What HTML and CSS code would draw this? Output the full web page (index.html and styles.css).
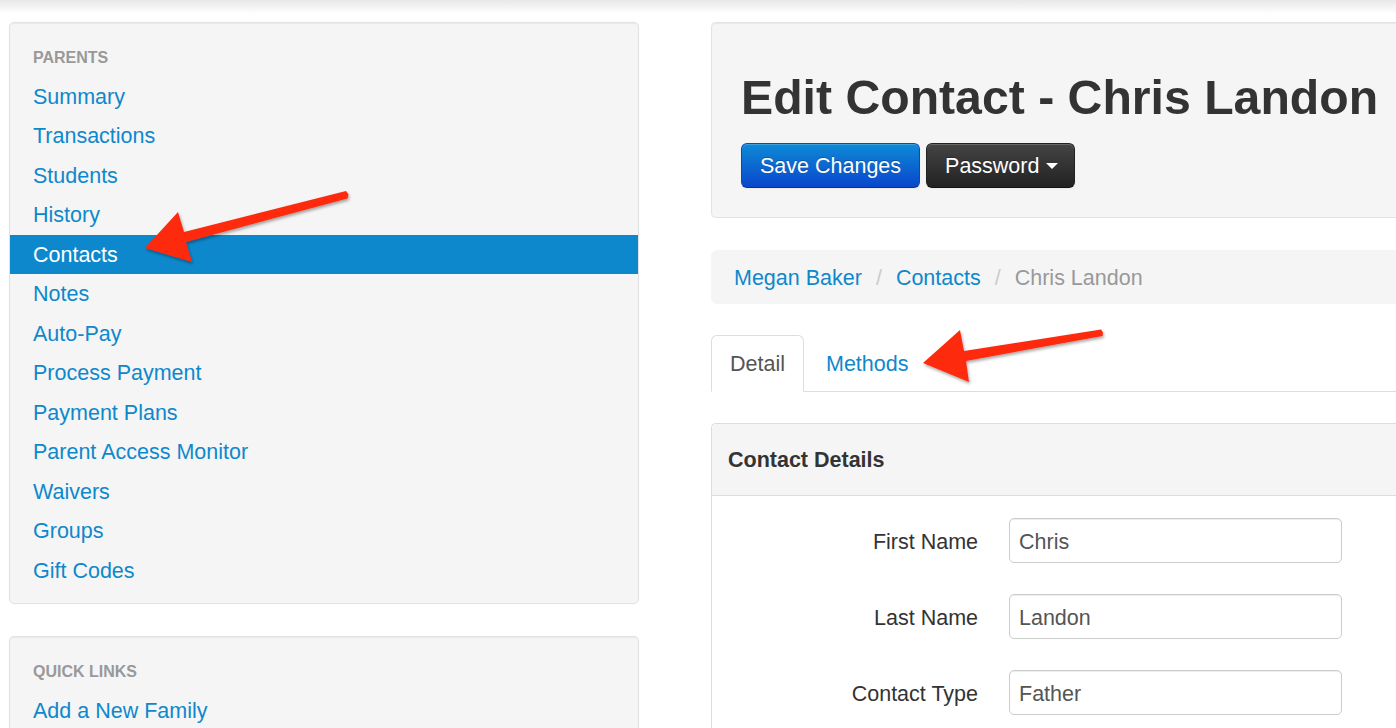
FILE: index.html
```html
<!DOCTYPE html>
<html>
<head>
<meta charset="utf-8">
<title>Edit Contact - Chris Landon</title>
<link rel="stylesheet" href="styles.css">
</head>
<body>
<div class="page">
  <aside class="sidebar">
    <div class="well">
      <div class="nav-header">Parents</div>
      <ul class="nav-list">
        <li><a href="#">Summary</a></li>
        <li><a href="#">Transactions</a></li>
        <li><a href="#">Students</a></li>
        <li><a href="#">History</a></li>
        <li class="active"><a href="#">Contacts</a></li>
        <li><a href="#">Notes</a></li>
        <li><a href="#">Auto-Pay</a></li>
        <li><a href="#">Process Payment</a></li>
        <li><a href="#">Payment Plans</a></li>
        <li><a href="#">Parent Access Monitor</a></li>
        <li><a href="#">Waivers</a></li>
        <li><a href="#">Groups</a></li>
        <li><a href="#">Gift Codes</a></li>
      </ul>
    </div>
    <div class="well well-short">
      <div class="nav-header">Quick Links</div>
      <ul class="nav-list">
        <li><a href="#">Add a New Family</a></li>
      </ul>
    </div>
  </aside>
  <main class="main">
    <div class="hero">
      <h1>Edit Contact - Chris Landon</h1>
      <div class="actions">
        <button class="btn btn-primary">Save Changes</button>
        <button class="btn btn-inverse">Password<span class="caret"></span></button>
      </div>
    </div>
    <nav class="breadcrumb">
      <a href="#">Megan Baker</a><span class="divider">/</span><a href="#">Contacts</a><span class="divider">/</span><span class="current">Chris Landon</span>
    </nav>
    <ul class="tabs">
      <li class="active"><a href="#">Detail</a></li>
      <li><a href="#">Methods</a></li>
    </ul>
    <section class="panel">
      <div class="panel-head">Contact Details</div>
      <div class="panel-body">
        <div class="row"><label>First Name</label><input type="text" value="Chris"></div>
        <div class="row"><label>Last Name</label><input type="text" value="Landon"></div>
        <div class="row"><label>Contact Type</label><input type="text" value="Father"></div>
      </div>
    </section>
  </main>
</div>
<svg class="arrows" width="1396" height="728" viewBox="0 0 1396 728">
  <defs>
    <filter id="sh" x="-20%" y="-20%" width="140%" height="140%">
      <feDropShadow dx="1" dy="2" stdDeviation="1.6" flood-color="#000" flood-opacity="0.35"/>
    </filter>
  </defs>
  <polygon filter="url(#sh)" fill="#fd2a0e" points="145,248 178,212 184,232 346,191 348.5,194.5 347.5,198.5 186,242 192,262"/>
  <polygon filter="url(#sh)" fill="#fd2a0e" points="923,363 960,330 964,351 1101,329.5 1103,332.5 1102.5,336 966,361 969,382"/>
</svg>
</body>
</html>
```
FILE: styles.css
```css
* { box-sizing: border-box; }
html, body { margin: 0; padding: 0; }
body {
  font-family: "Liberation Sans", Arial, Helvetica, sans-serif;
  color: #333;
  background: #fff linear-gradient(#e8e8e8, #ffffff 14px) no-repeat;
  background-size: 100% 14px;
  width: 1396px;
  height: 728px;
  overflow: hidden;
  position: relative;
}
.page {
  display: flex;
  align-items: flex-start;
  gap: 72px;
  padding: 22px 0 0 9px;
  height: 728px;
}
.sidebar {
  width: 630px;
  flex: none;
  display: flex;
  flex-direction: column;
  gap: 32px;
}
.well {
  background: #f5f5f5;
  border: 1px solid #e3e3e3;
  border-radius: 5px;
  box-shadow: inset 0 1px 1px rgba(0,0,0,.05), 0 0 2px rgba(0,0,0,.04);
  padding: 14px 0 13px;
}
.well-short {
  height: 92px;
  border-bottom: none;
  border-radius: 5px 5px 0 0;
  padding-bottom: 0;
}
.nav-header {
  font-size: 16px;
  font-weight: bold;
  color: #999;
  text-transform: uppercase;
  line-height: 39.5px;
  padding-left: 23px;
  padding-top: 1px;
  height: 39.5px;
}
.nav-list { list-style: none; margin: 0; padding: 0; }
.nav-list a {
  display: block;
  height: 39.5px;
  line-height: 39.5px;
  padding: 1px 0 0 23px;
  font-size: 21.5px;
  color: #0e88cc;
  text-decoration: none;
}
.nav-list .active a { background: #0e88cc; color: #fff; }

.main { width: 685px; flex: none; }
.hero {
  background: #f5f5f5;
  border: 1px solid #e3e3e3;
  border-right: none;
  border-radius: 5px 0 0 5px;
  box-shadow: inset 0 1px 1px rgba(0,0,0,.05);
  padding: 29px;
}
.hero h1 {
  font-size: 48.2px;
  line-height: 53px;
  margin: 19px 0;
  font-weight: bold;
  color: #333;
  white-space: nowrap;
}
.actions { display: flex; gap: 6px; }
.btn {
  display: inline-flex;
  align-items: center;
  height: 45px;
  padding: 2px 18px 0;
  font-family: "Liberation Sans", Arial, sans-serif;
  font-size: 21.5px;
  color: #fff;
  border-radius: 6px;
  border: 1px solid;
  text-shadow: 0 -1px 0 rgba(0,0,0,.25);
  box-shadow: inset 0 1px 0 rgba(255,255,255,.2), 0 1px 2px rgba(0,0,0,.05);
}
.btn-primary {
  background: linear-gradient(#0e8ad6, #0a46cc);
  border-color: #0a47c2 #0a47c2 #07309a;
}
.btn-inverse {
  background: linear-gradient(#444, #222);
  border-color: #222 #222 #111;
  padding-right: 16px;
}
.caret {
  width: 0; height: 0;
  border-top: 6px solid #fff;
  border-left: 6px solid transparent;
  border-right: 6px solid transparent;
  margin-left: 7px;
  margin-top: -2px;
}

.breadcrumb {
  margin-top: 32px;
  background: #f5f5f5;
  border-radius: 6px 0 0 6px;
  padding: 13px 23px 11px;
  font-size: 21.5px;
  line-height: 30px;
  white-space: nowrap;
}
.breadcrumb a { color: #0e88cc; text-decoration: none; }
.breadcrumb .divider { color: #ccc; padding: 0 14px; }
.breadcrumb .current { color: #999; }

.tabs {
  list-style: none;
  margin: 31px 0 0;
  padding: 0;
  display: flex;
  border-bottom: 1px solid #ddd;
  height: 57px;
}
.tabs li { margin-right: 3px; }
.tabs a {
  display: block;
  height: 57px;
  padding: 1px 18px 0;
  line-height: 55px;
  font-size: 21.5px;
  color: #0e88cc;
  text-decoration: none;
  border: 1px solid transparent;
  border-radius: 6px 6px 0 0;
}
.tabs .active a {
  color: #555;
  background: #fff;
  border-color: #ddd #ddd transparent;
}

.panel {
  margin-top: 31px;
  border: 1px solid #ddd;
  border-right: none;
  border-bottom: none;
  border-radius: 5px 0 0 0;
  background: #fff;
  height: 305px;
}
.panel-head {
  background: #f5f5f5;
  border-bottom: 1px solid #ddd;
  border-radius: 5px 0 0 0;
  height: 72px;
  line-height: 72px;
  padding: 0 16px;
  font-size: 21.5px;
  font-weight: bold;
  color: #333;
}
.panel-body {
  padding-top: 22px;
  display: flex;
  flex-direction: column;
  gap: 31px;
}
.row {
  display: grid;
  grid-template-columns: 266px 333px;
  column-gap: 31px;
  align-items: center;
  height: 45px;
}
.row label {
  display: block;
  height: 45px;
  text-align: right;
  font-size: 21.5px;
  color: #333;
  line-height: 49px;
}
.row input {
  height: 45px;
  width: 333px;
  border: 1px solid #ccc;
  border-radius: 5px;
  padding: 4px 9px 0;
  font-family: "Liberation Sans", Arial, sans-serif;
  font-size: 21.5px;
  color: #555;
  background: #fff;
  box-shadow: inset 0 1px 1px rgba(0,0,0,.075);
  outline: none;
}

.arrows {
  position: absolute;
  left: 0;
  top: 0;
  pointer-events: none;
}
```
